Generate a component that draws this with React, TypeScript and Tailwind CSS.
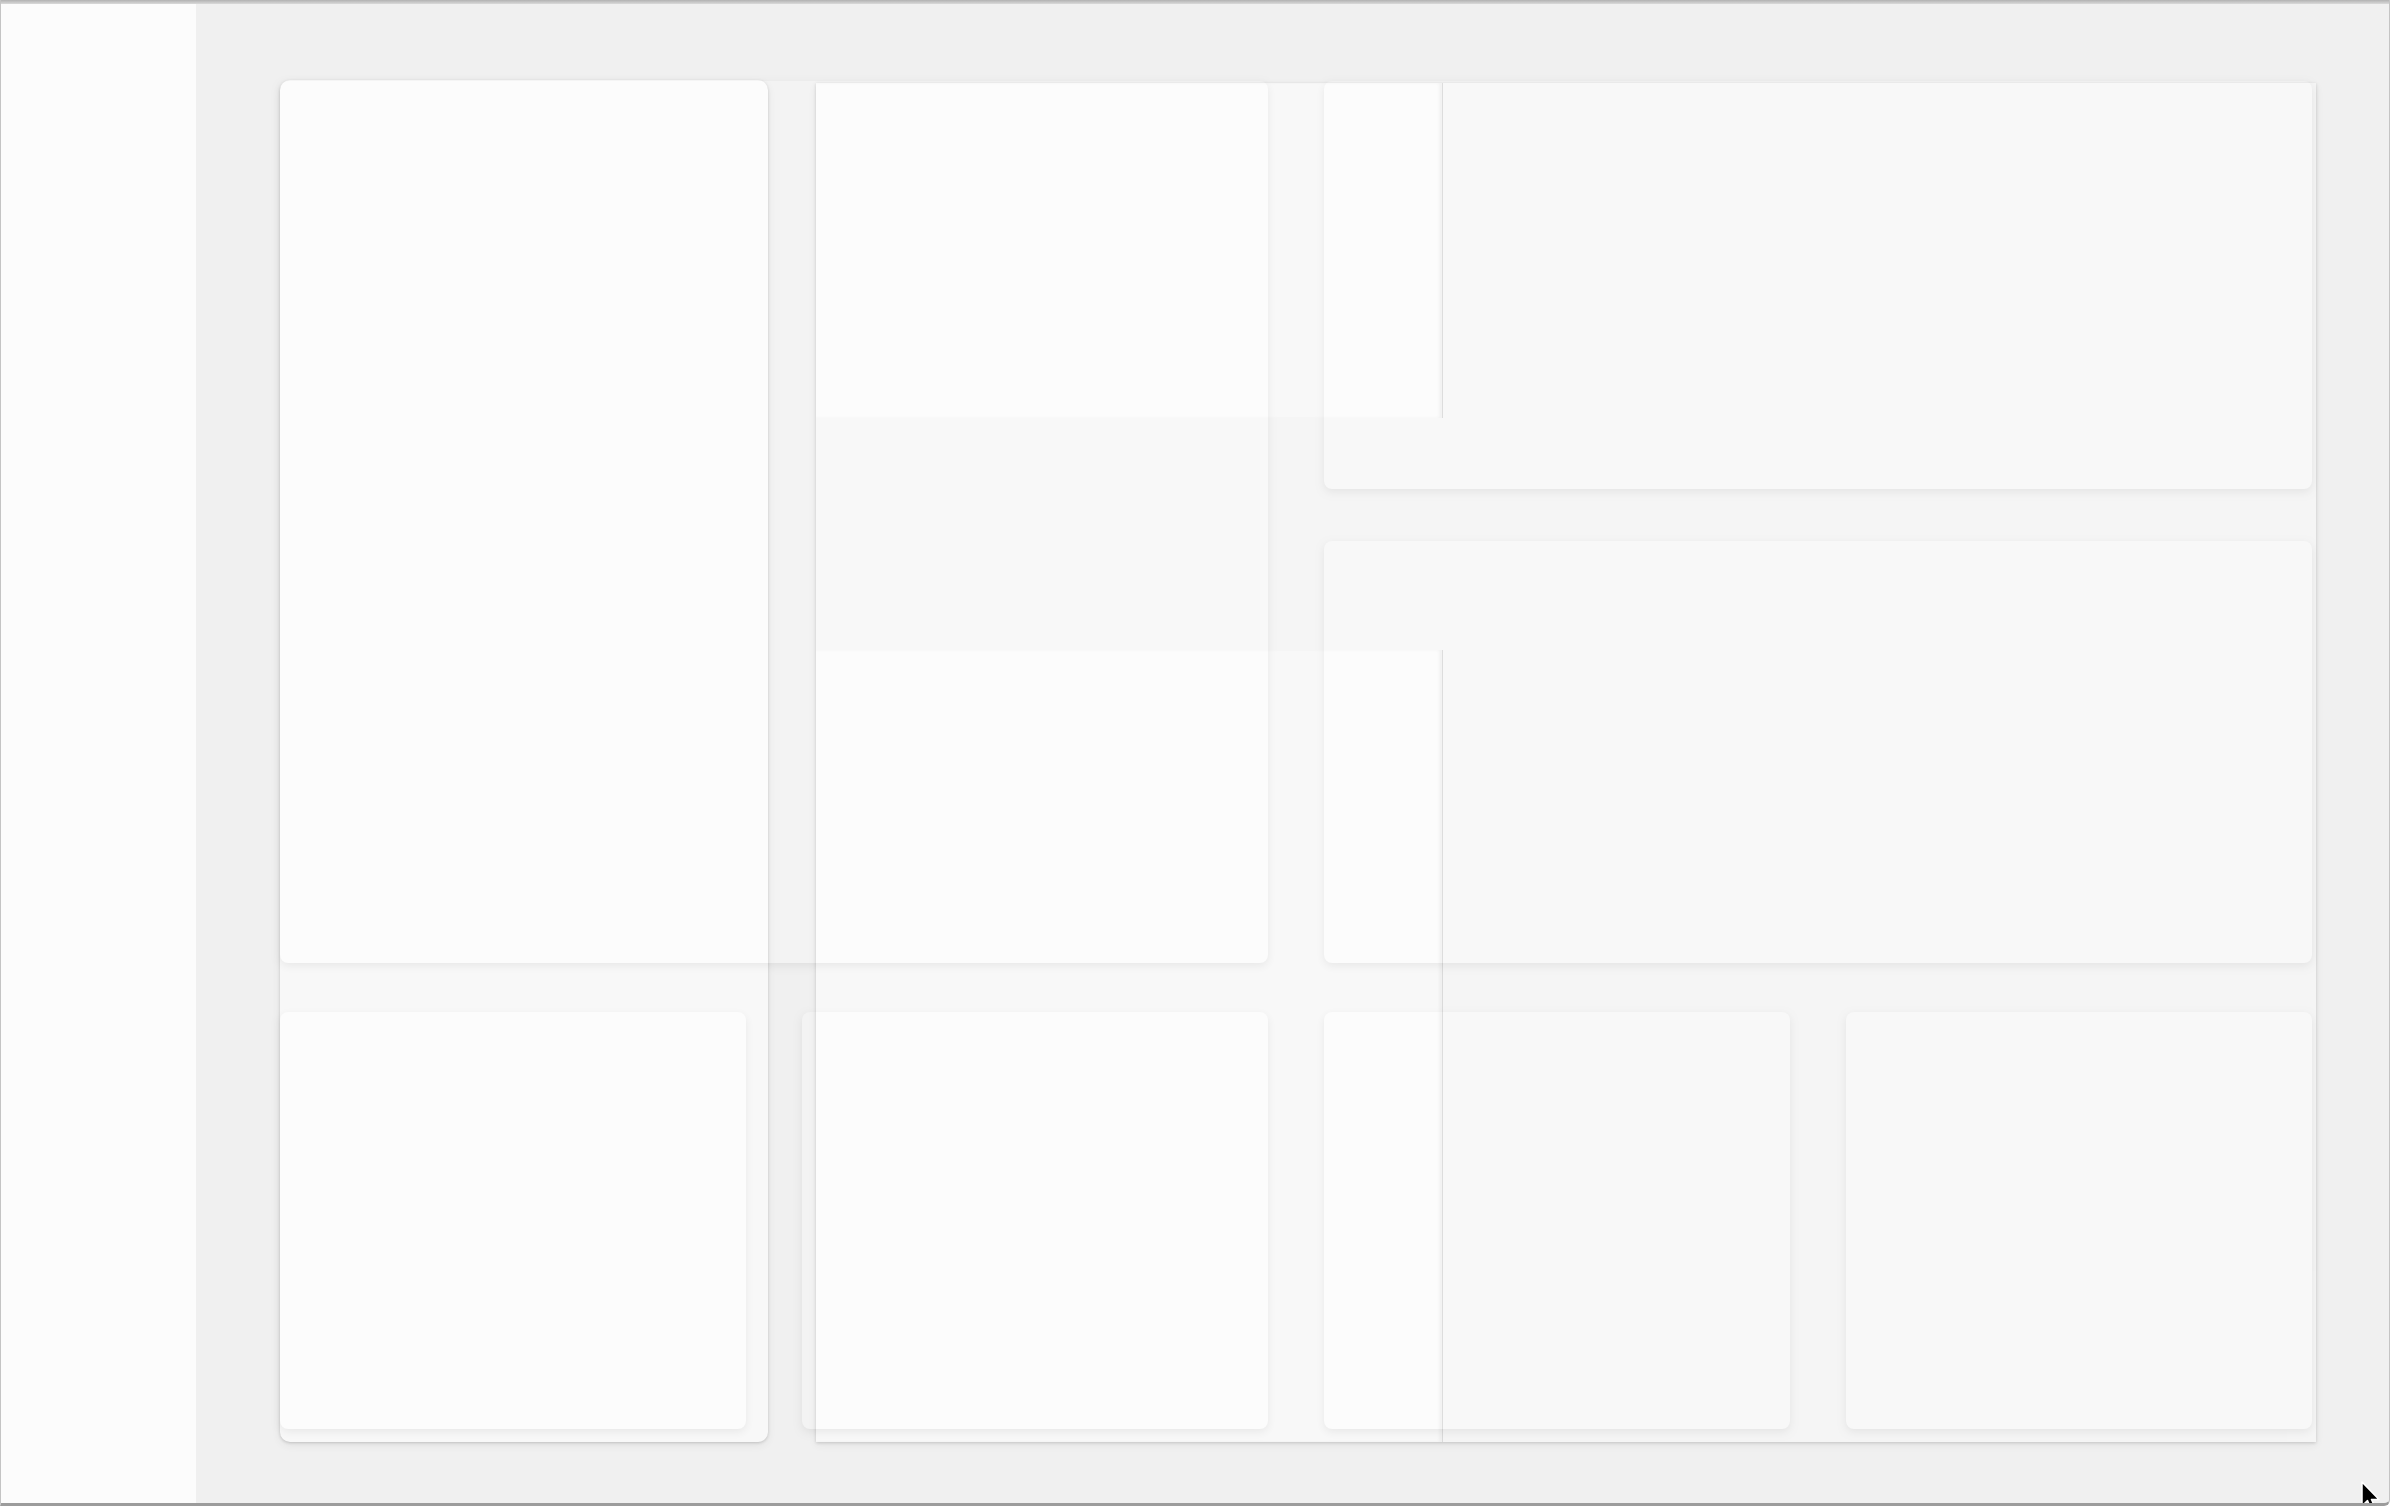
import React from 'react';

// Two page states caught mid cross-fade: the outgoing layout underneath,
// the incoming dashboard grid faded over it at low opacity.

function OutgoingLayout() {
  return (
    <div className="flex h-full gap-[48px] pl-[84px] pt-[76px]">
      <section className="h-[1362px] w-[488px] shrink-0 rounded-[10px] bg-[#fcfcfc] shadow-[0_1px_3px_rgba(0,0,0,0.22),0_3px_8px_rgba(0,0,0,0.08)]" />
      <section className="mt-[3px] flex h-[1359px] w-[1500px] shrink-0 bg-[#f7f7f7] shadow-[0_1px_3px_rgba(0,0,0,0.2),0_3px_8px_rgba(0,0,0,0.07)]">
        <div className="flex w-[627px] flex-col">
          <div className="h-[335px] border-r border-[#d3d3d3] bg-[#fcfcfc] shadow-[inset_-3px_0_3px_rgba(0,0,0,0.05)]" />
          <div className="h-[232px]" />
          <div className="flex-1 border-r border-[#d3d3d3] bg-[#fcfcfc] shadow-[inset_-3px_0_3px_rgba(0,0,0,0.05)]" />
        </div>
        <div className="flex-1" />
      </section>
    </div>
  );
}

function GhostCard({ className = '' }: { className?: string }) {
  return (
    <div
      className={`rounded-[8px] bg-[#fcfcfc] shadow-[0_3px_9px_rgba(0,0,0,0.28)] ${className}`}
    />
  );
}

function IncomingLayout() {
  return (
    <div className="pointer-events-none absolute inset-0 bg-[#f0f0f0] pl-[84px] pt-[77px] opacity-25">
      <div className="grid w-[2032px] grid-cols-4 grid-rows-[882px_417px] gap-x-[56px] gap-y-[49px]">
        <GhostCard className="col-span-2" />
        <div className="col-span-2 flex flex-col gap-[52px]">
          <GhostCard className="h-[408px]" />
          <GhostCard className="flex-1" />
        </div>
        <GhostCard />
        <GhostCard />
        <GhostCard />
        <GhostCard />
      </div>
    </div>
  );
}

function Cursor() {
  return (
    <svg
      className="pointer-events-none absolute left-[2360px] top-[1481px]"
      width="22"
      height="32"
      viewBox="0 0 22 32"
    >
      <path
        d="M1 1 L1 25 L6.5 19.5 L10.5 29 L14.5 27.5 L10.5 18.5 L18 18.5 Z"
        fill="#000"
        stroke="#fff"
        strokeWidth="1.5"
        strokeLinejoin="round"
      />
    </svg>
  );
}

export default function App() {
  return (
    <div className="relative flex h-[1506px] w-[2390px] flex-col overflow-hidden rounded-br-[6px] border-x border-b-[3px] border-x-[#c4c4c4] border-b-[#9c9c9c] bg-[#f0f0f0]">
      <div className="h-[4px] shrink-0 bg-linear-to-b from-[#b2b2b2] to-[#dadada]" />
      <div className="flex min-h-0 flex-1">
        <aside className="w-[195px] shrink-0 bg-[#fcfcfc]" />
        <main className="relative flex-1">
          <OutgoingLayout />
          <IncomingLayout />
        </main>
      </div>
      <Cursor />
    </div>
  );
}
